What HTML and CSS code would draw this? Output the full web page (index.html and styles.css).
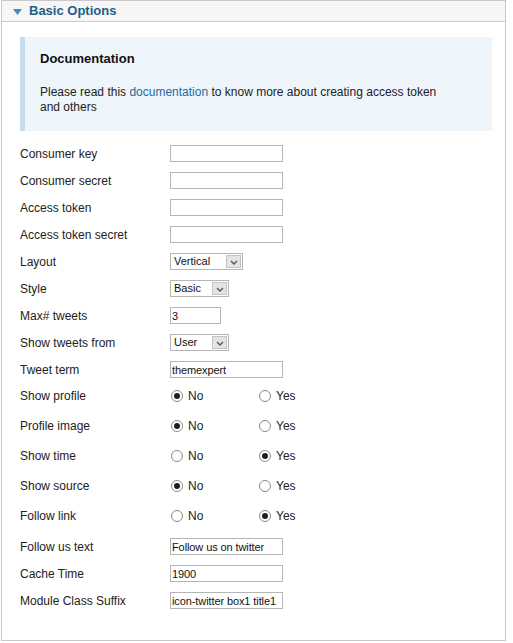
FILE: index.html
```html
<!DOCTYPE html>
<html>
<head>
<meta charset="utf-8">
<link rel="stylesheet" href="styles.css">
</head>
<body>
<div class="panel">
  <div class="panel-head">
    <svg class="caret" width="9" height="6" viewBox="0 0 9 6"><path d="M0 0 H9 L4.5 6 Z" fill="#3d8cc2"/></svg>
    <span class="panel-title">Basic Options</span>
  </div>
  <div class="panel-body">
    <div class="doc">
      <div class="doc-title">Documentation</div>
      <p class="doc-text">Please read this <a href="#" class="doc-link">documentation</a> to know more about creating access token and others</p>
    </div>

    <div class="form">
      <div class="row"><label class="lbl">Consumer key</label><input class="txt" type="text" value=""></div>
      <div class="row"><label class="lbl">Consumer secret</label><input class="txt" type="text" value=""></div>
      <div class="row"><label class="lbl">Access token</label><input class="txt" type="text" value=""></div>
      <div class="row"><label class="lbl">Access token secret</label><input class="txt" type="text" value=""></div>
      <div class="row"><label class="lbl">Layout</label>
        <div class="sel sel-wide"><span class="sel-val">Vertical</span><span class="sel-btn"><svg width="8" height="5" viewBox="0 0 8 5"><path d="M1 1 L4 4 L7 1" fill="none" stroke="#4a5a6a" stroke-width="1.4"/></svg></span></div>
      </div>
      <div class="row"><label class="lbl">Style</label>
        <div class="sel sel-narrow"><span class="sel-val">Basic</span><span class="sel-btn"><svg width="8" height="5" viewBox="0 0 8 5"><path d="M1 1 L4 4 L7 1" fill="none" stroke="#4a5a6a" stroke-width="1.4"/></svg></span></div>
      </div>
      <div class="row"><label class="lbl">Max# tweets</label><input class="txt txt-short" type="text" value="3"></div>
      <div class="row"><label class="lbl">Show tweets from</label>
        <div class="sel sel-narrow"><span class="sel-val">User</span><span class="sel-btn"><svg width="8" height="5" viewBox="0 0 8 5"><path d="M1 1 L4 4 L7 1" fill="none" stroke="#4a5a6a" stroke-width="1.4"/></svg></span></div>
      </div>
      <div class="row"><label class="lbl">Tweet term</label><input class="txt" type="text" value="themexpert"></div>

      <div class="row radio-row"><label class="lbl">Show profile</label>
        <label class="opt"><input type="radio" name="r1" checked><span>No</span></label>
        <label class="opt"><input type="radio" name="r1"><span>Yes</span></label>
      </div>
      <div class="row radio-row"><label class="lbl">Profile image</label>
        <label class="opt"><input type="radio" name="r2" checked><span>No</span></label>
        <label class="opt"><input type="radio" name="r2"><span>Yes</span></label>
      </div>
      <div class="row radio-row"><label class="lbl">Show time</label>
        <label class="opt"><input type="radio" name="r3"><span>No</span></label>
        <label class="opt"><input type="radio" name="r3" checked><span>Yes</span></label>
      </div>
      <div class="row radio-row"><label class="lbl">Show source</label>
        <label class="opt"><input type="radio" name="r4" checked><span>No</span></label>
        <label class="opt"><input type="radio" name="r4"><span>Yes</span></label>
      </div>
      <div class="row radio-row"><label class="lbl">Follow link</label>
        <label class="opt"><input type="radio" name="r5"><span>No</span></label>
        <label class="opt"><input type="radio" name="r5" checked><span>Yes</span></label>
      </div>

      <div class="row"><label class="lbl">Follow us text</label><input class="txt" type="text" value="Follow us on twitter"></div>
      <div class="row"><label class="lbl">Cache Time</label><input class="txt" type="text" value="1900"></div>
      <div class="row"><label class="lbl">Module Class Suffix</label><input class="txt" type="text" value="icon-twitter box1 title1"></div>
    </div>
  </div>
</div>
</body>
</html>
```

FILE: styles.css
```css
html, body {
  margin: 0;
  padding: 0;
  background: #ffffff;
}

body {
  font-family: "Liberation Sans", Arial, sans-serif;
  color: #222222;
}

.panel {
  margin-left: 1px;
  width: 503px;
  height: 639px;
  border: 1px solid #c9c9c9;
  background: #ffffff;
}

.panel-head {
  height: 20px;
  background: #f6f6f6;
  border-bottom: 1px solid #cccccc;
  display: flex;
  align-items: center;
  padding-left: 11px;
  gap: 7px;
}

.caret {
  display: block;
  margin-top: 1px;
}

.panel-title {
  font-size: 13px;
  font-weight: bold;
  color: #1f5e88;
  line-height: 16px;
}

.panel-body {
  padding: 15px 13px 0 18px;
}

.doc {
  background: #eef5fb;
  border-left: 5px solid #c6dced;
  padding: 14px 40px 16px 15px;
}

.doc-title {
  font-size: 13px;
  font-weight: bold;
  line-height: 16px;
  color: #111111;
}

.doc-text {
  margin: 18px 0 0 0;
  font-size: 12px;
  line-height: 15px;
  color: #222222;
}

.doc-link {
  color: #1f6aa0;
  text-decoration: none;
}

.form {
  margin-top: 9px;
}

.row {
  display: flex;
  align-items: center;
  height: 27px;
}

.radio-row {
  height: 25px;
  margin-bottom: 5px;
}

.lbl {
  width: 150px;
  flex: none;
  font-size: 12px;
  color: #222222;
}

.txt {
  box-sizing: border-box;
  width: 113px;
  height: 17px;
  margin: 0;
  padding: 0 1px;
  border: 1px solid #b5b5b5;
  font-family: "Liberation Sans", Arial, sans-serif;
  font-size: 11px;
  letter-spacing: -0.1px;
  color: #111111;
  background: #ffffff;
  outline: none;
}

.txt-short {
  width: 51px;
}

.sel {
  box-sizing: border-box;
  height: 17px;
  border: 1px solid #b5b5b5;
  display: flex;
  align-items: stretch;
  background: #ffffff;
}

.sel-wide {
  width: 73px;
}

.sel-narrow {
  width: 59px;
}

.sel-val {
  flex: 1;
  font-size: 11px;
  line-height: 15px;
  padding-left: 3px;
  color: #111111;
}

.sel-btn {
  width: 15px;
  margin: 1px;
  box-sizing: border-box;
  border: 1px solid #c4c4c4;
  background: #e4e4e4;
  display: flex;
  align-items: center;
  justify-content: center;
}

.sel-btn svg {
  display: block;
  margin-top: 1px;
}

.opt {
  display: flex;
  align-items: center;
  width: 88px;
  font-size: 12px;
  color: #222222;
}

.opt input {
  appearance: none;
  -webkit-appearance: none;
  box-sizing: border-box;
  width: 12px;
  height: 12px;
  margin: 0 5px 0 1px;
  border: 1px solid #8a8a8a;
  border-radius: 50%;
  background: #ffffff;
  position: relative;
}

.opt input:checked::after {
  content: "";
  position: absolute;
  left: 2px;
  top: 2px;
  width: 6px;
  height: 6px;
  border-radius: 50%;
  background: #1e1e1e;
}
```
